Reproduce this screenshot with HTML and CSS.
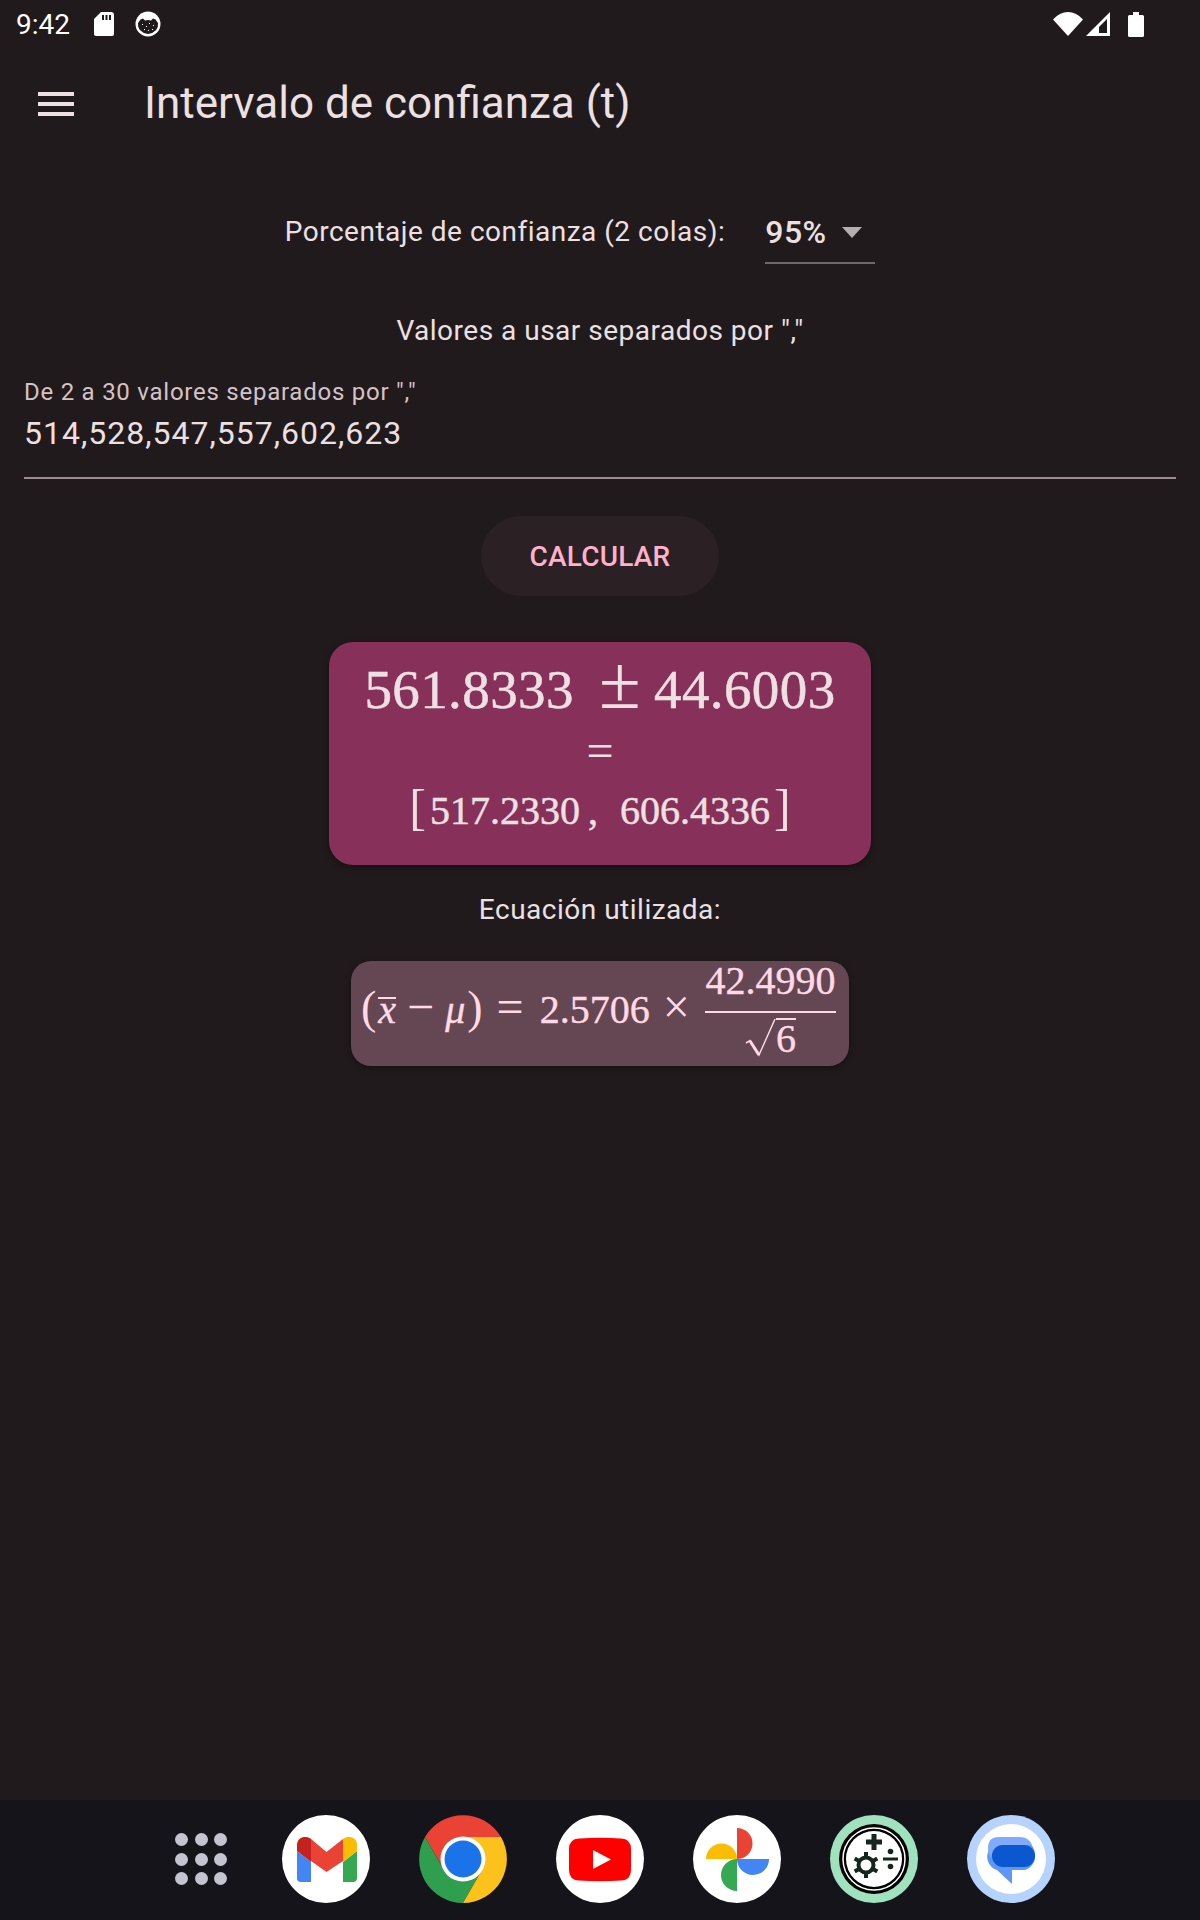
FILE: index.html
```html
<!DOCTYPE html>
<html lang="es">
<head>
  <meta charset="UTF-8">
  <title>Intervalo de confianza (t)</title>
  <meta name="viewport" content="width=device-width, initial-scale=1">
  <link rel="stylesheet" href="styles.css">
</head>
<body>
  <div class="page">
    <div class="statusbar">
      <span class="clock">9:42</span>
      <svg class="sd-icon" width="20" height="24" viewBox="0 0 20 24"><path fill="#fff" d="M7 0H17a3 3 0 0 1 3 3V22a2 2 0 0 1-2 2H2a2 2 0 0 1-2-2V7Z"/><path fill="#201a1c" d="M8 3h2v5H8zM11.5 3h2v5h-2zM15 3h2v5h-2z"/></svg>
      <svg class="cat-icon" width="26" height="26" viewBox="0 0 26 26"><circle cx="13" cy="13" r="12.5" fill="#fff"/><path fill="#201a1c" d="M3 12 5.500 8.500 8 7.500 10 9.500Q13 8.500 16 9.500L18 7.500 20.500 8.500 23 12Q24 21 13 23 2 21 3 12Z"/><path fill="#fff" d="M7 13h1v1H7zM11 15h1v1h-1zM14 12h1v1h-1zM18 14h1v1h-1zM9 18h1v1H9zM13 19h1v1h-1zM17 18h1v1h-1z"/></svg>
      <div class="status-right">
        <svg width="30" height="24" viewBox="0 0 30 24"><path fill="#fff" d="M0 7.500Q6.500 0 15 0T30 7.500L15 24Z"/></svg>
        <svg width="24" height="24" viewBox="0 0 24 24"><path fill="#fff" fill-rule="evenodd" d="M24 0V24H0ZM21 7 13 15V21H21Z"/></svg>
        <svg class="battery" width="16" height="25" viewBox="0 0 16 25"><path fill="#fff" d="M5 0h6v3h3.500A1.500 1.500 0 0 1 16 4.500V23.500A1.500 1.500 0 0 1 14.500 25H1.500A1.500 1.500 0 0 1 0 23.500V4.500A1.500 1.500 0 0 1 1.500 3H5Z"/></svg>
      </div>
    </div>

    <div class="toolbar">
      <div class="menu-btn"><span></span><span></span><span></span></div>
      <div class="toolbar-title">Intervalo de confianza (t)</div>
    </div>

    <div class="content">
      <div class="confidence-row">
        <span class="body-text">Porcentaje de confianza (2 colas):</span>
        <div class="dropdown">
          <span class="dropdown-value">95%</span>
          <span class="dropdown-arrow"></span>
        </div>
      </div>

      <div class="body-text values-title">Valores a usar separados por ","</div>

      <div class="field">
        <div class="field-label">De 2 a 30 valores separados por ","</div>
        <div class="field-value">514,528,547,557,602,623</div>
      </div>

      <div class="calc-btn">CALCULAR</div>

      <div class="result-card">
        <div class="result-main">561.8333<span class="pm">±</span>44.6003</div>
        <div class="result-eq">=</div>
        <div class="result-range"><span class="bracket">[</span>517.2330<span class="comma">,</span>606.4336<span class="bracket">]</span></div>
      </div>

      <div class="body-text eq-title">Ecuación utilizada:</div>

      <div class="eq-card">
        <span class="eq-left"><span class="paren">(</span><span class="xbar">x</span><span class="op minus">−</span><i class="mu">μ</i><span class="paren">)</span><span class="op equals">=</span><span>2.5706</span><span class="op times">×</span></span>
        <div class="fraction">
          <div class="numerator">42.4990</div>
          <div class="denominator"><svg class="root-sign" width="31" height="40" viewBox="0 0 31 40"><path fill="none" stroke="#ffd9e3" stroke-width="1.500" d="M1 25 5 22.500 14 37 30 1"/><path fill="none" stroke="#ffd9e3" stroke-width="3" d="M5 23 14 37"/></svg><span class="radicand">6</span></div>
        </div>
      </div>
    </div>

    <div class="dock">
      <div class="apps-grid">
        <span></span><span></span><span></span>
        <span></span><span></span><span></span>
        <span></span><span></span><span></span>
      </div>

      <svg class="app" viewBox="0 0 88 88">
        <circle cx="44" cy="44" r="44" fill="#fff"/>
        <path fill="#4285f4" d="M15 36 29 47V67H19a4 4 0 0 1-4-4Z"/>
        <path fill="#34a853" d="M61 47 75 36V63a4 4 0 0 1-4 4H61Z"/>
        <path fill="#ea4335" d="M29 24 44.500 37 61 24V46L44.500 57 29 46Z"/>
        <path fill="#c5221f" d="M15 36V30C15 22 24 20 29 24V47Z"/>
        <path fill="#fbbc04" d="M61 24C66 20 75 22 75 30V36L61 47Z"/>
      </svg>

      <svg class="app" viewBox="0 0 88 88">
        <path fill="#ea4335" d="M6 22A44 44 0 0 1 82 22H44L25 55Z"/>
        <path fill="#2f9e4f" d="M6 22A44 44 0 0 0 44 88L63 55H25Z"/>
        <path fill="#fcc11a" d="M82 22A44 44 0 0 1 44 88L63 55 44 22Z"/>
        <circle cx="44" cy="44" r="22.500" fill="#fff"/>
        <circle cx="44" cy="44" r="18.500" fill="#1a73e8"/>
      </svg>

      <svg class="app" viewBox="0 0 88 88">
        <circle cx="44" cy="44" r="44" fill="#fff"/>
        <path fill="#f00" d="M23 23.500Q44 22 65 23.500 75 24 75 34V55Q75 65 65 65.500 44 67 23 65.500 13 65 13 55V34Q13 24 23 23.500Z"/>
        <path fill="#fff" d="M37 35 55 44.500 37 54Z"/>
      </svg>

      <svg class="app" viewBox="0 0 88 88">
        <circle cx="44" cy="44" r="44" fill="#fff"/>
        <path fill="#ea4335" d="M44 13A15.500 15.500 0 0 1 44 44Z"/>
        <path fill="#4285f4" d="M44 44H76A16 16 0 0 1 44 44Z"/>
        <path fill="#34a853" d="M44 44V76A16 16 0 0 1 44 44Z"/>
        <path fill="#fbbc04" d="M44 44H13A15.500 15.500 0 0 1 44 44Z"/>
      </svg>

      <svg class="app" viewBox="0 0 88 88">
        <circle cx="44" cy="44" r="44" fill="#9fe2bd"/>
        <circle cx="44" cy="44" r="35" fill="#000"/>
        <circle cx="44" cy="44" r="31" fill="none" stroke="#fff" stroke-width="1.500"/>
        <circle cx="44" cy="44" r="28" fill="#fff"/>
        <path fill="none" stroke="#16261c" stroke-width="5" d="M44 19V35M36 27H52"/>
        <path fill="none" stroke="#16261c" stroke-width="3" d="M53 44H68"/>
        <circle cx="60.500" cy="36.500" r="2.800" fill="#16261c"/>
        <circle cx="60.500" cy="51.500" r="2.800" fill="#16261c"/>
        <circle cx="36" cy="50" r="7.500" fill="none" stroke="#16261c" stroke-width="4"/>
        <path fill="none" stroke="#16261c" stroke-width="4" d="M36 37V42M36 58V63M24.700 43.500 29 46M43 54 47.300 56.500M24.700 56.500 29 54M43 46 47.300 43.500"/>
      </svg>

      <svg class="app" viewBox="0 0 88 88">
        <circle cx="44" cy="44" r="44" fill="#b6d3fd"/>
        <circle cx="44" cy="44" r="35" fill="#fff"/>
        <path fill="#5e97f6" d="M32 26H58A14 14 0 0 1 68 41 14 14 0 0 1 58 55H45V69L30 55A14 14 0 0 1 21 37 12 12 0 0 1 32 26Z"/>
        <path fill="#82aafa" d="M32 22H53A13 13 0 0 1 65 30H36Q27 30 25 38L24 43Q21 38 21 33 21 22 32 22Z"/>
        <rect x="25" y="30" width="43" height="22" rx="11" fill="#0b57d0"/>
      </svg>
    </div>
  </div>
</body>
</html>
```

FILE: styles.css
```css
* {
  box-sizing: border-box;
}
body {
  margin: 0;
  background: #201a1c;
  color: #ece0e2;
  font-family: Roboto, "Liberation Sans", sans-serif;
}
.page {
  width: 1200px;
  height: 1920px;
  display: flex;
  flex-direction: column;
}

/* status bar */
.statusbar {
  height: 48px;
  display: flex;
  align-items: center;
  padding: 0 56px 0 16px;
  color: #fff;
}
.clock {
  font-size: 28px;
  width: 78px;
}
.cat-icon {
  margin-left: 21px;
}
.status-right {
  margin-left: auto;
  display: flex;
  align-items: center;
  gap: 3px;
}
.battery {
  margin-left: 15px;
}

/* toolbar */
.toolbar {
  height: 112px;
  display: flex;
  align-items: center;
  padding-left: 38px;
}
.menu-btn {
  width: 36px;
  height: 24px;
  display: flex;
  flex-direction: column;
  justify-content: space-between;
}
.menu-btn span {
  height: 4px;
  background: #ece0e2;
}
.toolbar-title {
  margin: 0 0 3px 70px;
  font-size: 44px;
}

/* form */
.content {
  flex: 1;
  display: flex;
  flex-direction: column;
  align-items: center;
}
.body-text {
  font-size: 28px;
  line-height: 40px;
  letter-spacing: 0.5px;
}
.confidence-row {
  margin-top: 8px;
  height: 96px;
  display: flex;
  align-items: flex-start;
  padding: 44px 40px 0 0;
}
.dropdown {
  margin-left: 40px;
  width: 110px;
  height: 52px;
  border-bottom: 2px solid #6f686a;
  display: flex;
  align-items: flex-start;
}
.dropdown-value {
  font-size: 32px;
  line-height: 40px;
  font-weight: 500;
  letter-spacing: 0.5px;
}
.dropdown-arrow {
  margin: 15px 0 0 15px;
  border-left: 10px solid transparent;
  border-right: 10px solid transparent;
  border-top: 11px solid #b5adb0;
}
.values-title {
  margin-top: 47px;
}
.field {
  align-self: stretch;
  margin: 27px 24px 0;
  height: 101px;
  border-bottom: 2px solid #9d8c90;
}
.field-label {
  font-size: 24px;
  line-height: 28px;
  letter-spacing: 0.75px;
  color: #d5c2c6;
}
.field-value {
  font-size: 32px;
  line-height: 40px;
  letter-spacing: 1px;
  margin-top: 7px;
}
.calc-btn {
  margin-top: 37px;
  width: 238px;
  height: 80px;
  border-radius: 40px;
  background: #2b2024;
  color: #ffb0cb;
  font-size: 28px;
  font-weight: 500;
  letter-spacing: 0.2px;
  display: flex;
  align-items: center;
  justify-content: center;
}

/* results, math set in a serif */
.result-card {
  margin-top: 46px;
  width: 542px;
  height: 223px;
  border-radius: 24px;
  background: #87305a;
  box-shadow: 0 2px 6px rgba(0,0,0,0.4);
  font-family: "Liberation Serif", serif;
  -webkit-text-stroke: 0.5px currentColor;
  text-align: center;
}
.result-main {
  font-size: 55px;
  line-height: 60px;
  letter-spacing: 0.4px;
  padding-top: 18px;
}
.pm {
  font-size: 76px;
  line-height: 40px;
  margin: 0 13px 0 25px;
  -webkit-text-stroke: 0;
}
.result-eq {
  font-size: 48px;
  line-height: 44px;
  margin-top: 9px;
  -webkit-text-stroke: 0;
}
.result-range {
  font-size: 40px;
  line-height: 50px;
  margin-top: 13px;
}
.bracket {
  font-size: 50px;
  line-height: 40px;
  margin: 0 4px;
  -webkit-text-stroke: 0;
}
.comma {
  margin: 0 22px 0 8px;
}
.eq-title {
  margin-top: 25px;
}
.eq-card {
  margin-top: 31px;
  width: 498px;
  height: 105px;
  border-radius: 20px;
  background: #654653;
  box-shadow: 0 2px 6px rgba(0,0,0,0.4);
  color: #ffd9e3;
  font-family: "Liberation Serif", serif;
  font-size: 40px;
  -webkit-text-stroke: 0.4px currentColor;
  display: flex;
  align-items: center;
  justify-content: space-between;
  padding: 0 13px 0 10px;
}
.eq-left {
  display: flex;
  align-items: baseline;
  margin-bottom: 12px;
  white-space: nowrap;
}
.paren {
  font-size: 46px;
  -webkit-text-stroke: 0;
}
.xbar {
  display: inline-block;
  font-style: italic;
  line-height: 22px;
  margin: 0 0 0 2px;
  border-top: 2px solid #ffd9e3;
}
.mu {
  margin-right: 2px;
}
.op {
  font-size: 48px;
  line-height: 40px;
  margin: 0 11px;
  -webkit-text-stroke: 0;
}
.equals {
  margin: 0 16px 0 14px;
}
.times {
  margin: 0 0 0 13px;
}
.fraction {
  width: 131px;
  text-align: center;
}
.numerator {
  line-height: 46px;
  padding-bottom: 7px;
  border-bottom: 2px solid #ffd9e3;
  box-sizing: content-box;
}
.denominator {
  height: 56px;
  display: flex;
  justify-content: center;
  align-items: flex-start;
}
.root-sign {
  margin-top: 5px;
}
.radicand {
  border-top: 2px solid #ffd9e3;
  margin-top: 5px;
  line-height: 38px;
  height: 40px;
}

/* launcher dock */
.dock {
  height: 120px;
  background: #14141a;
  display: flex;
  align-items: center;
  gap: 49px;
  padding: 0 0 2px 175px;
}
.apps-grid {
  width: 52px;
  display: grid;
  grid-template-columns: repeat(3, 13px);
  justify-content: space-between;
  row-gap: 6.500px;
  margin-right: 6px;
}
.apps-grid span {
  width: 13px;
  height: 13px;
  border-radius: 50%;
  background: #c4c3d0;
}
.app {
  width: 88px;
  height: 88px;
  flex: none;
}
```
